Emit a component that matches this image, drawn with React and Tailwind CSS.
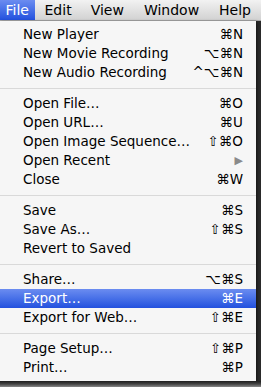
import React from 'react';

const font = { fontFamily: '"DejaVu Sans", "Liberation Sans", sans-serif' };

const groups = [
  [
    { label: 'New Player', keys: '⌘N' },
    { label: 'New Movie Recording', keys: '⌥⌘N' },
    { label: 'New Audio Recording', keys: '^⌥⌘N' },
  ],
  [
    { label: 'Open File…', keys: '⌘O' },
    { label: 'Open URL…', keys: '⌘U' },
    { label: 'Open Image Sequence…', keys: '⇧⌘O' },
    { label: 'Open Recent', submenu: true },
    { label: 'Close', keys: '⌘W' },
  ],
  [
    { label: 'Save', keys: '⌘S' },
    { label: 'Save As…', keys: '⇧⌘S' },
    { label: 'Revert to Saved' },
  ],
  [
    { label: 'Share…', keys: '⌥⌘S' },
    { label: 'Export…', keys: '⌘E', active: true },
    { label: 'Export for Web…', keys: '⇧⌘E' },
  ],
  [
    { label: 'Page Setup…', keys: '⇧⌘P' },
    { label: 'Print…', keys: '⌘P' },
  ],
];

const MenuItem = ({ item }) => (
  <div
    className={`flex items-center justify-between h-[19px] pl-[23px] pr-[13px] text-[13.5px] leading-none ${
      item.active ? 'bg-gradient-to-b from-[#6b8cf0] to-[#2350de] text-white' : 'text-black'
    }`}
  >
    <span>{item.label}</span>
    {item.keys && <span>{item.keys}</span>}
    {item.submenu && <span className="text-[#8a8a8a] text-[11px]">▶</span>}
  </div>
);

export default function App() {
  return (
    <div className="w-[261px] h-[387px] bg-[#2b2b2b] flex flex-col overflow-hidden" style={font}>
      {/* Menu bar */}
      <div className="h-[21px] flex items-center bg-gradient-to-b from-[#f2f2f2] to-[#d2d2d2] border-b border-[#a8a8a8] text-[14px] text-black">
        <div className="h-full w-[44px] flex items-center justify-center text-white bg-gradient-to-b from-[#6b8cf0] to-[#2350de]">
          File
        </div>
        <span className="pl-[10px] pr-[9px]">Edit</span>
        <span className="px-[10px]">View</span>
        <span className="px-[10px]">Window</span>
        <span className="px-[10px]">Help</span>
      </div>

      {/* Dropdown */}
      <div className="w-[256px] bg-[#f6f6f6] pt-[4px] pb-[4px] shadow-[1px_1px_3px_rgba(0,0,0,0.6)]">
        {groups.map((group, gi) => (
          <div key={gi}>
            {gi > 0 && (
              <div className="h-[12px] flex items-center">
                <div className="w-full h-px bg-[#d9d9d9]" />
              </div>
            )}
            {group.map((item) => (
              <MenuItem key={item.label} item={item} />
            ))}
          </div>
        ))}
      </div>

      <div className="flex-1 bg-gradient-to-b from-[#1e1e1e] via-[#444] to-[#8a8a8a]" />
    </div>
  );
}
